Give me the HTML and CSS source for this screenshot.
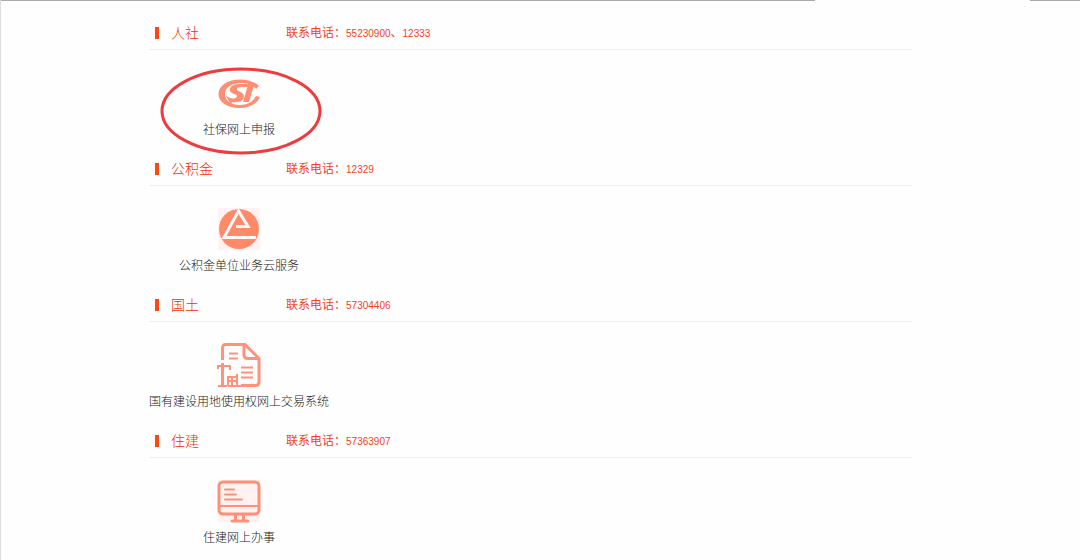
FILE: index.html
```html
<!DOCTYPE html>
<html lang="zh-CN">
<head>
  <meta charset="UTF-8" />
  <title>网上办事</title>
  <link rel="stylesheet" href="styles.css">
</head>
<body>
  <div class="topline"><span class="tab-gap"></span></div>

  <main class="container">
    <section class="dept">
      <header class="dept-head">
        <h2>人社</h2>
        <p class="phone">联系电话：<span class="num">55230900</span>、<span class="num">12333</span></p>
      </header>
      <a class="service" href="#">
        <svg class="icon" viewBox="0 0 44 44" aria-hidden="true">
          <path fill="#ff8e73" d="M42 15C38 11 31 8.500 23 8.500C11 8.500 1.500 14.500 1.500 23C1.500 31.500 11 37 22 37C32 37 40 33 43 26L39 25C36 31 30 34 23 34C14 34 8 30 8 23C8 16 15 12 24 12C31 12 36 14 39 18Z"/>
          <path fill="#ff8e73" d="M35 13H22C16 13 12 16 13 20C14 23 20 23 20 25C20 27 17 28 13 27L9 25L14 34L15 31C23 32 27 29 27 25C27 21 19 20 20 18C20 16 23 16 35 16Z"/>
          <path fill="#ff8e73" d="M31 14H37L32 31H26Z"/>
        </svg>
        <span>社保网上申报</span>
        <svg class="mark" viewBox="0 0 162 88" aria-hidden="true">
          <ellipse cx="81" cy="44" rx="79" ry="42" fill="none" stroke="#ee3b3e" stroke-width="3"/>
        </svg>
      </a>
    </section>

    <section class="dept">
      <header class="dept-head">
        <h2>公积金</h2>
        <p class="phone">联系电话：<span class="num">12329</span></p>
      </header>
      <a class="service" href="#">
        <svg class="icon" viewBox="0 0 44 44" aria-hidden="true">
          <path fill="#fff2f0" d="M1 1H43V43H1Z"/>
          <circle cx="22" cy="22" r="20" fill="#ff8a69"/>
          <path fill="none" stroke="#fff8f6" stroke-width="3" d="M39 30.500H7L21.500 4L31 19.500H19"/>
        </svg>
        <span>公积金单位业务云服务</span>
      </a>
    </section>

    <section class="dept">
      <header class="dept-head">
        <h2>国土</h2>
        <p class="phone">联系电话：<span class="num">57304406</span></p>
      </header>
      <a class="service" href="#">
        <svg class="icon" viewBox="0 0 44 44" aria-hidden="true">
          <g fill="none" stroke="#ff9279" stroke-width="3">
            <path d="M5.500 17V5Q5.500 1.500 9 1.500H28L42 15.500V39Q42 42.500 38.500 42.500H24"/>
            <path d="M27 1.500V12Q27 15.500 31 15.500H42"/>
            <path stroke-width="2" d="M12 10.500H21M12 15.500H21M24 24.500H36M24 29.500H36M24 34.500H36"/>
            <path d="M5.500 20V43"/>
            <path stroke-width="2" d="M0 23H14M1 43H10M1 23V26M13 23V27M11 43V34H21M11 38H21M15 34V43M20 31V43M11 43H24"/>
          </g>
        </svg>
        <span>国有建设用地使用权网上交易系统</span>
      </a>
    </section>

    <section class="dept">
      <header class="dept-head">
        <h2>住建</h2>
        <p class="phone">联系电话：<span class="num">57363907</span></p>
      </header>
      <a class="service" href="#">
        <svg class="icon" viewBox="0 0 44 44" aria-hidden="true">
          <path fill="#fff2f1" d="M1 1H43V43H1Z"/>
          <g fill="none" stroke="#ff8f76" stroke-width="3">
            <rect x="2" y="3" width="40" height="32" rx="4"/>
            <path stroke-width="2" d="M2 27H42"/>
            <path stroke-width="2" stroke-linecap="round" d="M8 10.500H17M8 15.500H19M8 20.500H25"/>
            <path d="M18.500 35V42M26.500 35V42"/>
            <path stroke-linecap="round" d="M15 42H31"/>
          </g>
        </svg>
        <span>住建网上办事</span>
      </a>
    </section>
  </main>
</body>
</html>
```

FILE: styles.css
```css
* {
  box-sizing: border-box;
}
body {
  margin: 0;
  min-height: 100vh;
  overflow: hidden;
  background: #fefefe;
  border-left: 1px solid #dcdcdc;
  font-family: "Liberation Sans", "Noto Sans CJK SC", sans-serif;
  font-size: 12px;
  color: #444;
}
.topline {
  display: flex;
  justify-content: flex-end;
  height: 1px;
  padding-right: 50px;
  background: #aaa;
}
.tab-gap {
  width: 215px;
  background: #fefefe;
}
.container {
  padding: 16px 168px 0 149px;
}
.dept {
  height: 136px;
}
.dept-head {
  display: flex;
  align-items: center;
  height: 33px;
  border-bottom: 1px solid #ededed;
  color: #f4411b;
}
h2 {
  width: 130px;
  margin: 0 0 0 5px;
  padding-left: 12px;
  border-left: 4px solid #ff4713;
  font-size: 14px;
  line-height: 12px;
  font-weight: 300;
  color: #f03000;
}
.phone {
  margin: 0;
  padding-left: 1px;
  line-height: 16px;
}
.num {
  font-size: 10px;
}
.service {
  position: relative;
  display: flex;
  flex-direction: column;
  align-items: center;
  width: 178px;
  padding-top: 21px;
  color: #222;
  line-height: 18px;
  font-weight: 300;
  white-space: nowrap;
  text-decoration: none;
}
.icon {
  width: 44px;
  height: 44px;
  margin-bottom: 6px;
}
.mark {
  position: absolute;
  top: 17px;
  left: 10px;
  width: 162px;
  height: 88px;
}
```
